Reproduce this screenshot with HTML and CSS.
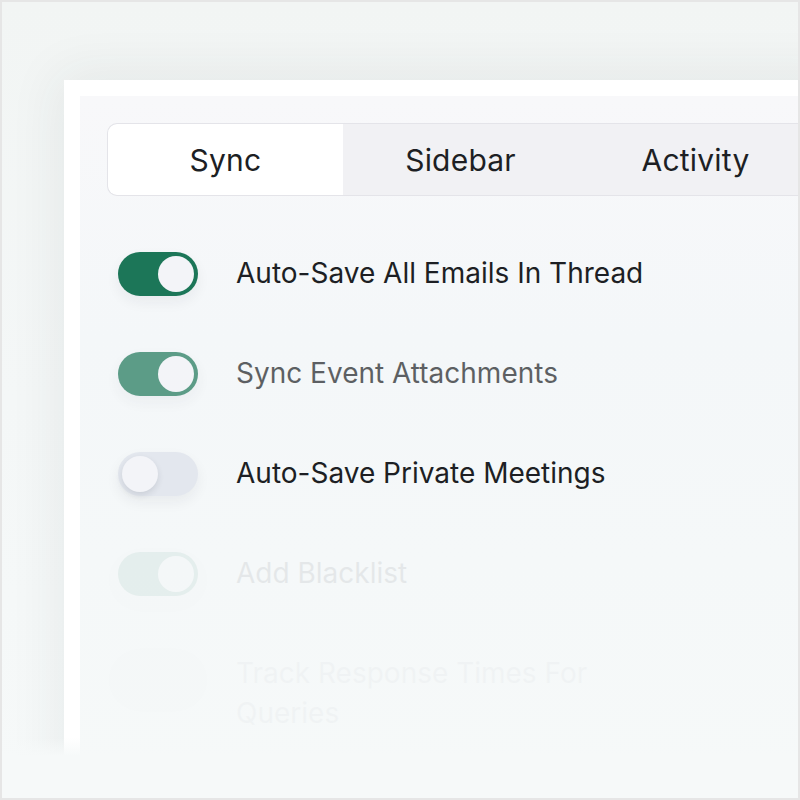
FILE: index.html
```html
<!DOCTYPE html>
<html lang="en">
<head>
  <meta charset="UTF-8">
  <title>Sync Settings</title>
  <link rel="stylesheet" href="styles.css">
</head>
<body>

<div class="frame">
  <div class="card">
    <div class="panel">

      <div class="tabs">
        <div class="tab active">Sync</div>
        <div class="tab">Sidebar</div>
        <div class="tab">Activity</div>
      </div>

      <ul class="settings">
        <li class="setting">
          <span class="toggle on"><span class="knob"></span></span>
          <span class="label">Auto-Save All Emails In Thread</span>
        </li>
        <li class="setting dim">
          <span class="toggle on"><span class="knob"></span></span>
          <span class="label">Sync Event Attachments</span>
        </li>
        <li class="setting">
          <span class="toggle"><span class="knob"></span></span>
          <span class="label">Auto-Save Private Meetings</span>
        </li>
        <li class="setting faded">
          <span class="toggle on"><span class="knob"></span></span>
          <span class="label">Add Blacklist</span>
        </li>
        <li class="setting ghost">
          <span class="toggle"><span class="knob"></span></span>
          <span class="label">Track Response Times For Queries</span>
        </li>
      </ul>

    </div>
  </div>
  <div class="fade"></div>
</div>

</body>
</html>
```

FILE: styles.css
```css
:root {
  --green: #1c7658;
  --text-color: #1d1f24;
  --frame-border: #e6e6e6;
  --tab-border: #e4e4e9;
  --tab-bg: #f1f1f4;
  --off-bg: #e3e7ee;
  --knob: #f3f4f8;
  --page-bottom: #f6f9f9;
}

* {
  box-sizing: border-box;
}

body {
  margin: 0;
  font-family: Inter, "Noto Sans", sans-serif;
  color: var(--text-color);
}

.frame {
  position: relative;
  width: 800px;
  height: 800px;
  overflow: hidden;
  border: 2px solid var(--frame-border);
  background: linear-gradient(180deg, #f2f5f4 0%, #f4f7f7 50%, var(--page-bottom) 100%);
  padding: 78px 0 0 62px;
}

.card {
  width: 780px;
  height: 720px;
  background-color: #fff;
  padding: 16px;
  box-shadow: 0 0 50px 6px rgba(40, 60, 60, 0.07);
}

.panel {
  height: 100%;
  padding: 27px 0 0 27px;
  background: linear-gradient(180deg, #f8f8fa 0%, #f4f7f9 35%, var(--page-bottom) 100%);
}

/* bottom of the card dissolves into the page */
.fade {
  position: absolute;
  left: 0;
  right: 0;
  bottom: 0;
  height: 60px;
  background: linear-gradient(180deg, rgba(246, 249, 249, 0) 0%, var(--page-bottom) 30%);
}

.tabs {
  display: flex;
  height: 73px;
  border: 1px solid var(--tab-border);
  border-right: none;
  border-radius: 10px 0 0 10px;
  overflow: hidden;
  background-color: var(--tab-bg);
}

.tab {
  width: 235px;
  display: flex;
  align-items: center;
  justify-content: center;
  font-size: 30px;
  letter-spacing: 0.2px;
}

.tab.active {
  background-color: #fff;
  border-radius: 9px 0 0 9px;
}

.settings {
  list-style: none;
  margin: 56px 0 0;
  padding: 0 0 0 11px;
}

.setting {
  display: flex;
  align-items: flex-start;
  gap: 38px;
  height: 100px;
}

.label {
  max-width: 430px;
  font-size: 28px;
  line-height: 40px;
  margin-top: 1px;
}

.toggle {
  position: relative;
  flex: none;
  width: 80px;
  height: 44px;
  border-radius: 22px;
  background-color: var(--off-bg);
  box-shadow: 0 6px 14px rgba(30, 40, 50, 0.06);
}

.toggle.on {
  background-color: var(--green);
}

.knob {
  position: absolute;
  top: 4px;
  left: 4px;
  width: 36px;
  height: 36px;
  border-radius: 50%;
  background-color: var(--knob);
  box-shadow: 0 3px 6px rgba(30, 40, 60, 0.12);
}

.toggle.on .knob {
  left: 40px;
  box-shadow: none;
}

.dim {
  opacity: 0.7;
}

.faded {
  opacity: 0.07;
}

.ghost {
  opacity: 0.02;
}
```
